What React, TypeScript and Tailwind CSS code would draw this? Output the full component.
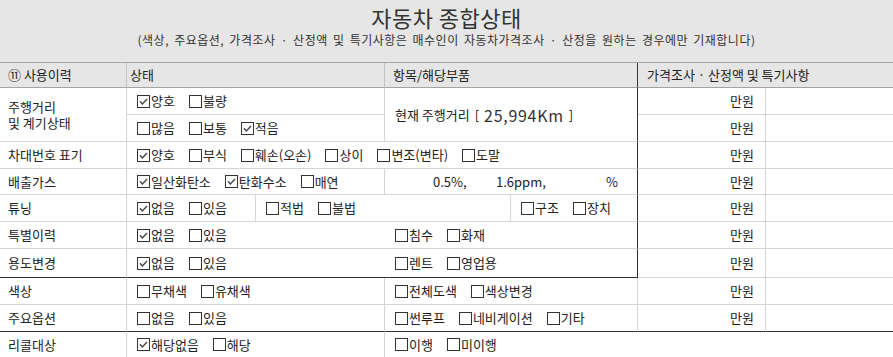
import React from 'react'

// border helpers — per-side colours so nothing depends on utility order
const RL = 'border-r border-r-[#d4d4d4]'
const RD = 'border-r border-r-[#333333]'
const BL = 'border-b border-b-[#d4d4d4]'
const BD = 'border-b border-b-[#333333]'
const BH = 'border-b border-b-[#a3a3a3]'
const RH = 'border-r border-r-[#c4c4c4]'

function Box({ checked }: { checked?: boolean }) {
  return (
    <svg width="13" height="13" viewBox="0 0 13 13" className="shrink-0">
      <rect x="0.5" y="0.5" width="12" height="12" fill="#fff" stroke="#333" />
      {checked && <polyline points="3,6.3 5.4,9 10,4" fill="none" stroke="#444" strokeWidth="1.4" />}
    </svg>
  )
}

function Opt({ label, checked }: { label: string; checked?: boolean }) {
  return (
    <span className="flex items-center mr-[14px] whitespace-nowrap">
      <Box checked={checked} />
      <span className="ml-[1px]">{label}</span>
    </span>
  )
}

function Cell({ className = '', children }: { className?: string; children?: React.ReactNode }) {
  return <div className={`flex items-center min-w-0 ${className}`}>{children}</div>
}

function Won({ last }: { last?: boolean }) {
  return (
    <>
      <Cell className={`justify-end pr-[11px] ${RL} ${last ? BD : BL}`}>만원</Cell>
      <Cell className={last ? BD : BL} />
    </>
  )
}

export default function App() {
  return (
    <div className="w-[893px] h-[357px] overflow-hidden bg-white text-[#222] text-[13px] leading-[16px] font-['Noto_Sans_CJK_KR',sans-serif]">
      <div className="h-[62px] bg-[#e6e6e6] flex flex-col items-center pt-[4px]">
        <div className="text-[22px] leading-[27px] tracking-[0.5px] text-[#333]">자동차 종합상태</div>
        <div className="text-[12px] leading-[16px] mt-[1px] tracking-[0.5px] [word-spacing:2px] text-[#333]">
          (색상, 주요옵션, 가격조사 · 산정액 및 특기사항은 매수인이 자동차가격조사 · 산정을 원하는 경우에만 기재합니다)
        </div>
      </div>

      <div className="grid grid-cols-[127px_129px_129px_126px_127px_128px_127px] grid-rows-[25px_27px_27px_27px_26px_27px_27px_29px_27px_27px_25px] border-t border-t-[#a3a3a3]">
        {/* header */}
        <Cell className={`bg-[#e6e6e6] pl-[8px] ${RH} ${BH}`}>⑪ 사용이력</Cell>
        <Cell className={`col-span-2 bg-[#e6e6e6] pl-[3px] ${RH} ${BH}`}>상태</Cell>
        <Cell className={`col-span-2 bg-[#e6e6e6] pl-[8px] ${RD} ${BH}`}>항목/해당부품</Cell>
        <Cell className={`col-span-2 bg-[#e6e6e6] pl-[9px] ${BH}`}>가격조사 · 산정액 및 특기사항</Cell>

        {/* 주행거리 */}
        <Cell className={`row-span-2 pl-[8px] ${RL} ${BL}`}>
          <div className="flex flex-col">
            <span className="leading-[16px]">주행거리</span>
            <span className="leading-[16px]">및 계기상태</span>
          </div>
        </Cell>
        <Cell className={`col-span-2 pl-[10px] ${RL} ${BL}`}>
          <Opt label="양호" checked />
          <Opt label="불량" />
        </Cell>
        <Cell className={`col-span-2 row-span-2 pl-[10px] ${RD} ${BL}`}>
          <span className="whitespace-nowrap flex items-center">
            현재 주행거리<span className="ml-[5px]">[</span>
            <span className="text-[16px] ml-[5px] tracking-[0.7px] text-[#333]">25,994Km</span>
            <span className="ml-[5px]">]</span>
          </span>
        </Cell>
        <Won />
        <Cell className={`col-span-2 pl-[10px] ${RL} ${BL}`}>
          <Opt label="많음" />
          <Opt label="보통" />
          <Opt label="적음" checked />
        </Cell>
        <Won />

        {/* 차대번호 */}
        <Cell className={`pl-[8px] ${RL} ${BL}`}>차대번호 표기</Cell>
        <Cell className={`col-span-4 pl-[10px] ${RD} ${BL}`}>
          <Opt label="양호" checked />
          <Opt label="부식" />
          <Opt label="훼손(오손)" />
          <Opt label="상이" />
          <Opt label="변조(변타)" />
          <Opt label="도말" />
        </Cell>
        <Won />

        {/* 배출가스 */}
        <Cell className={`pl-[8px] ${RL} ${BL}`}>배출가스</Cell>
        <Cell className={`col-span-2 pl-[10px] ${RL} ${BL}`}>
          <Opt label="일산화탄소" checked />
          <Opt label="탄화수소" checked />
          <Opt label="매연" />
        </Cell>
        <Cell className={`col-span-2 pl-[48px] ${RD} ${BL}`}>
          <span className="w-[63px]">0.5%,</span>
          <span className="w-[110px]">1.6ppm,</span>
          <span>%</span>
        </Cell>
        <Won />

        {/* 튜닝 */}
        <Cell className={`pl-[8px] ${RL} ${BL}`}>튜닝</Cell>
        <Cell className={`pl-[10px] ${RL} ${BL}`}>
          <Opt label="없음" checked />
          <Opt label="있음" />
        </Cell>
        <Cell className={`col-span-2 pl-[10px] ${RL} ${BL}`}>
          <Opt label="적법" />
          <Opt label="불법" />
        </Cell>
        <Cell className={`pl-[10px] ${RD} ${BL}`}>
          <Opt label="구조" />
          <Opt label="장치" />
        </Cell>
        <Won />

        {/* 특별이력 */}
        <Cell className={`pl-[8px] ${RL} ${BL}`}>특별이력</Cell>
        <Cell className={`col-span-2 pl-[10px] ${BL}`}>
          <Opt label="없음" checked />
          <Opt label="있음" />
        </Cell>
        <Cell className={`col-span-2 pl-[10px] ${RD} ${BL}`}>
          <Opt label="침수" />
          <Opt label="화재" />
        </Cell>
        <Won />

        {/* 용도변경 */}
        <Cell className={`pl-[8px] ${RL} ${BD}`}>용도변경</Cell>
        <Cell className={`col-span-2 pl-[10px] ${BD}`}>
          <Opt label="없음" checked />
          <Opt label="있음" />
        </Cell>
        <Cell className={`col-span-2 pl-[10px] ${RD} ${BD}`}>
          <Opt label="렌트" />
          <Opt label="영업용" />
        </Cell>
        <Won />

        {/* 색상 */}
        <Cell className={`pl-[8px] ${RL} ${BL}`}>색상</Cell>
        <Cell className={`col-span-2 pl-[10px] ${RL} ${BL}`}>
          <Opt label="무채색" />
          <Opt label="유채색" />
        </Cell>
        <Cell className={`col-span-2 pl-[10px] ${RL} ${BL}`}>
          <Opt label="전체도색" />
          <Opt label="색상변경" />
        </Cell>
        <Won />

        {/* 주요옵션 */}
        <Cell className={`pl-[8px] ${RL} ${BD}`}>주요옵션</Cell>
        <Cell className={`col-span-2 pl-[10px] ${RL} ${BD}`}>
          <Opt label="없음" />
          <Opt label="있음" />
        </Cell>
        <Cell className={`col-span-2 pl-[10px] ${RL} ${BD}`}>
          <Opt label="썬루프" />
          <Opt label="네비게이션" />
          <Opt label="기타" />
        </Cell>
        <Won last />

        {/* 리콜대상 */}
        <Cell className={`pl-[8px] ${RL}`}>리콜대상</Cell>
        <Cell className={`col-span-2 pl-[10px] ${RL}`}>
          <Opt label="해당없음" checked />
          <Opt label="해당" />
        </Cell>
        <Cell className="col-span-2 pl-[10px]">
          <Opt label="이행" />
          <Opt label="미이행" />
        </Cell>
        <Cell className="col-span-2" />
      </div>
    </div>
  )
}
